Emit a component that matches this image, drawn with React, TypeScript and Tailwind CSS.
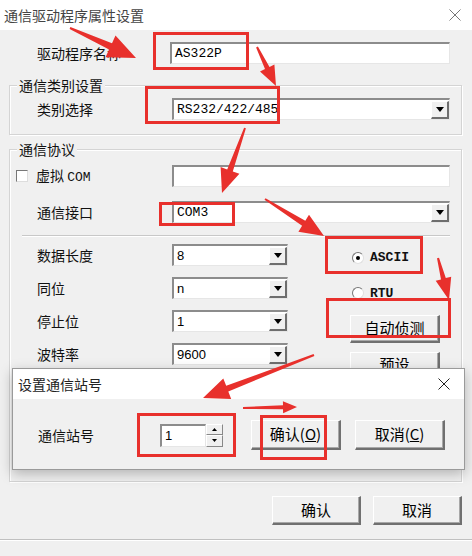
import React from "react";

const cjk = { fontFamily: '"Noto Sans CJK SC", "Noto Sans", sans-serif' };
const mono = { fontFamily: '"Liberation Mono", "Noto Sans CJK SC", monospace' };
const sans = { fontFamily: '"Liberation Sans", Arial, sans-serif' };

function arrow(x1: number, y1: number, x2: number, y2: number, head = 26, headW = 22, shaftW = 7, tailW = 2) {
  const dx = x2 - x1;
  const dy = y2 - y1;
  const len = Math.hypot(dx, dy);
  const ux = dx / len;
  const uy = dy / len;
  const nx = -uy;
  const ny = ux;
  const bx = x2 - ux * head;
  const by = y2 - uy * head;
  const p = (x: number, y: number) => `${x.toFixed(1)},${y.toFixed(1)}`;
  return [
    p(x1 + (nx * tailW) / 2, y1 + (ny * tailW) / 2),
    p(bx + (nx * shaftW) / 2, by + (ny * shaftW) / 2),
    p(bx + (nx * headW) / 2, by + (ny * headW) / 2),
    p(x2, y2),
    p(bx - (nx * headW) / 2, by - (ny * headW) / 2),
    p(bx - (nx * shaftW) / 2, by - (ny * shaftW) / 2),
    p(x1 - (nx * tailW) / 2, y1 - (ny * tailW) / 2),
  ].join(" ");
}

function TextBox({ value, className = "", font = mono }: { value?: string; className?: string; font?: React.CSSProperties }) {
  return (
    <div
      className={`h-[22px] bg-white border-t-2 border-l-2 border-[#8c8c8c] border-r border-b border-r-[#e6e6e6] border-b-[#e6e6e6] flex items-center pl-[3px] text-[13px] text-black ${className}`}
      style={font}
    >
      {value}
    </div>
  );
}

function Select({ value, className = "", font = mono }: { value: string; className?: string; font?: React.CSSProperties }) {
  return (
    <div
      className={`h-[22px] bg-white border-t-2 border-l-2 border-[#8c8c8c] border-r border-b border-r-[#e6e6e6] border-b-[#e6e6e6] flex items-center text-[13px] text-black ${className}`}
    >
      <span className="flex-1 pl-[3px]" style={font}>{value}</span>
      <div className="w-[18px] h-[18px] bg-[#f0f0f0] border-t border-l border-white border-r-2 border-b-2 border-r-[#6e6e6e] border-b-[#6e6e6e] flex items-center justify-center">
        <svg width="8" height="5" viewBox="0 0 8 5">
          <polygon points="0,0 8,0 4,5" fill="#000" />
        </svg>
      </div>
    </div>
  );
}

function Button({ children, className = "" }: { children: React.ReactNode; className?: string }) {
  return (
    <div
      className={`bg-[#f0f0f0] border-t border-l border-white border-r-2 border-b-2 border-r-[#707070] border-b-[#707070] shadow-[inset_-1px_-1px_0_#a8a8a8] flex items-center justify-center text-[15px] text-black ${className}`}
      style={cjk}
    >
      {children}
    </div>
  );
}

function Radio({ checked, label }: { checked?: boolean; label: string }) {
  return (
    <div className="flex items-center gap-[6px]">
      <div className="w-[12px] h-[12px] rounded-full bg-white border border-t-[#777] border-l-[#777] border-r-[#e0e0e0] border-b-[#e0e0e0] flex items-center justify-center">
        {checked && <div className="w-[4px] h-[4px] rounded-full bg-black" />}
      </div>
      <span className="text-[13px] font-bold text-[#111]" style={mono}>{label}</span>
    </div>
  );
}

export default function App() {
  const red = "#e8302c";
  return (
    <div className="relative w-[472px] h-[556px] bg-[#f0f0f0] overflow-hidden select-none" style={cjk}>
      {/* Title bar */}
      <div className="h-[30px] bg-white flex items-center justify-between pl-[4px] pr-[10px]">
        <span className="text-[14px] text-[#444]">通信驱动程序属性设置</span>
        <svg width="12" height="12" viewBox="0 0 12 12" className="mr-[1px]">
          <path d="M0.5 0.5 L11.5 11.5 M11.5 0.5 L0.5 11.5" stroke="#777" strokeWidth="1" />
        </svg>
      </div>

      <div className="pl-[9px] pr-[10px]">
        {/* Driver name */}
        <div className="mt-[12px] flex items-center h-[22px]">
          <span className="w-[161px] pl-[28px] text-[14px] text-[#111]">驱动程序名称</span>
          <TextBox value="AS322P" className="w-[280px]" />
        </div>

        {/* Type group */}
        <div className="relative mt-[21px] h-[50px] border border-[#d4d4d4] shadow-[inset_1px_1px_0_#fff,1px_1px_0_#fff]">
          <span className="absolute -top-[11px] left-[7px] px-[2px] bg-[#f0f0f0] text-[14px] leading-[20px] text-[#111]">通信类别设置</span>
          <div className="mt-[12px] flex items-center h-[22px]">
            <span className="w-[162px] pl-[27px] text-[14px] text-[#111]">类别选择</span>
            <Select value="RS232/422/485" className="w-[278px]" />
          </div>
        </div>

        {/* Protocol group */}
        <div className="relative mt-[14px] h-[333px] border border-[#d4d4d4] shadow-[inset_1px_1px_0_#fff,1px_1px_0_#fff]">
          <span className="absolute -top-[11px] left-[7px] px-[2px] bg-[#f0f0f0] text-[14px] leading-[20px] text-[#111]">通信协议</span>

          <div className="mt-[15px] flex items-center h-[22px]">
            <div className="w-[162px] pl-[6px] flex items-center gap-[8px]">
              <div className="w-[12px] h-[12px] bg-white border border-t-[#777] border-l-[#777] border-r-[#ddd] border-b-[#ddd]" />
              <span className="text-[14px] text-[#111]">虚拟 <span className="text-[13px]" style={mono}>COM</span></span>
            </div>
            <TextBox className="w-[278px]" />
          </div>

          <div className="mt-[14px] flex items-center h-[22px]">
            <span className="w-[162px] pl-[27px] text-[14px] text-[#111]">通信接口</span>
            <Select value="COM3" className="w-[278px]" />
          </div>

          <div className="mt-[12px] ml-[12px] w-[428px] h-[2px] border-t border-[#c8c8c8] border-b border-b-white" />

          <div className="mt-[7px] flex">
            <div className="flex flex-col gap-[11px]">
              {[
                ["数据长度", "8"],
                ["同位", "n"],
                ["停止位", "1"],
                ["波特率", "9600"],
              ].map(([label, value]) => (
                <div key={label} className="flex items-center h-[22px]">
                  <span className="w-[162px] pl-[27px] text-[14px] text-[#111]">{label}</span>
                  <Select value={value} className="w-[116px]" font={sans} />
                </div>
              ))}
            </div>
            <div className="ml-[62px] flex flex-col">
              <div className="mt-[4px] ml-[2px]">
                <Radio checked label="ASCII" />
              </div>
              <div className="mt-[16px] ml-[2px]">
                <Radio label="RTU" />
              </div>
              <Button className="mt-[12px] w-[90px] h-[28px]">自动侦测</Button>
              <Button className="mt-[9px] w-[90px] h-[26px]">预设</Button>
            </div>
          </div>
        </div>

        {/* Bottom buttons */}
        <div className="mt-[14px] flex justify-end gap-[12px]">
          <Button className="w-[89px] h-[29px]">确认</Button>
          <Button className="w-[89px] h-[29px]">取消</Button>
        </div>
      </div>

      <div className="mt-[14px] h-[2px] border-t border-[#c0c0c0] border-b border-b-white" />

      {/* Station dialog overlay */}
      <div className="absolute left-[12px] top-[368px] w-[453px] h-[102px] bg-[#f0f0f0] border border-[#9a9a9a] shadow-[0_4px_12px_rgba(0,0,0,0.25)]">
        <div className="h-[30px] bg-white flex items-center justify-between pl-[5px] pr-[14px]">
          <span className="text-[14px] text-[#222]">设置通信站号</span>
          <svg width="12" height="12" viewBox="0 0 12 12">
            <path d="M0.5 0.5 L11.5 11.5 M11.5 0.5 L0.5 11.5" stroke="#222" strokeWidth="1" />
          </svg>
        </div>
        <div className="flex items-center mt-[21px]">
          <span className="w-[147px] pl-[25px] text-[14px] text-[#111]">通信站号</span>
          <div className="flex h-[23px]">
            <TextBox value="1" className="w-[46px] h-[23px]" font={sans} />
            <div className="w-[17px] flex flex-col">
              <div className="flex-1 bg-[#f0f0f0] border border-t-white border-l-white border-r-[#888] border-b-[#888] flex items-center justify-center">
                <svg width="5" height="3" viewBox="0 0 5 3"><polygon points="0,3 5,3 2.5,0" fill="#000" /></svg>
              </div>
              <div className="flex-1 bg-[#f0f0f0] border border-t-white border-l-white border-r-[#888] border-b-[#888] flex items-center justify-center">
                <svg width="5" height="3" viewBox="0 0 5 3"><polygon points="0,0 5,0 2.5,3" fill="#000" /></svg>
              </div>
            </div>
          </div>
          <Button className="ml-[28px] w-[90px] h-[30px]">
            确认(<span className="underline">O</span>)
          </Button>
          <Button className="ml-[14px] w-[90px] h-[30px]">
            取消(<span className="underline">C</span>)
          </Button>
        </div>
      </div>

      {/* Annotation boxes */}
      <div className="absolute left-[153px] top-[32px] w-[96px] h-[38px] border-[3px] border-[#e8302c]" />
      <div className="absolute left-[145px] top-[86px] w-[135px] h-[38px] border-[3px] border-[#e8302c]" />
      <div className="absolute left-[159px] top-[202px] w-[76px] h-[24px] border-[3px] border-[#e8302c]" />
      <div className="absolute left-[325px] top-[236px] w-[98px] h-[38px] border-[3px] border-[#e8302c]" />
      <div className="absolute left-[326px] top-[298px] w-[125px] h-[40px] border-[3px] border-[#e8302c]" />
      <div className="absolute left-[137px] top-[413px] w-[99px] h-[44px] border-[3px] border-[#e8302c]" />
      <div className="absolute left-[260px] top-[415px] w-[67px] h-[45px] border-[3px] border-[#e8302c]" />

      {/* Annotation arrows */}
      <svg className="absolute left-0 top-0 pointer-events-none" width="472" height="556">
        <polygon points={arrow(70, 28, 136, 58, 28, 24, 7, 2)} fill={red} />
        <polygon points={arrow(257, 47, 276, 86, 20, 16, 5, 2)} fill={red} />
        <polygon points={arrow(245, 128, 222, 193, 24, 20, 6, 2)} fill={red} />
        <polygon points={arrow(265, 199, 324, 236, 24, 20, 6, 2)} fill={red} />
        <polygon points={arrow(438, 258, 449, 300, 22, 16, 5, 2)} fill={red} />
        <polygon points={arrow(314, 355, 203, 398, 26, 22, 6, 2)} fill={red} />
        <polygon points={arrow(243, 408, 297, 407, 14, 12, 4, 2)} fill={red} />
      </svg>
    </div>
  );
}
